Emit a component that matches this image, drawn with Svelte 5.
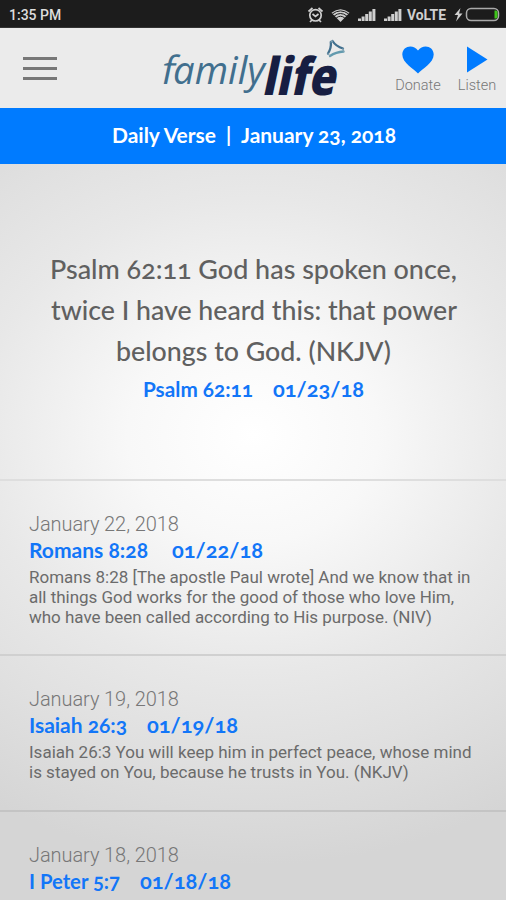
<script lang="ts">
	const entries = [
		{
			id: 'romans',
			date: 'January 22, 2018',
			ref: 'Romans 8:28',
			refWidth: 119,
			short: '01/22/18',
			lines: [
				'Romans 8:28 [The apostle Paul wrote] And we know that in',
				'all things God works for the good of those who love Him,',
				'who have been called according to His purpose. (NIV)'
			]
		},
		{
			id: 'isaiah',
			date: 'January 19, 2018',
			ref: 'Isaiah 26:3',
			refWidth: 98,
			short: '01/19/18',
			lines: [
				'Isaiah 26:3 You will keep him in perfect peace, whose mind',
				'is stayed on You, because he trusts in You. (NKJV)'
			]
		},
		{ id: 'peter', date: 'January 18, 2018', ref: 'I Peter 5:7', refWidth: 91, short: '01/18/18', lines: [] }
	];
	const verse = [
		{ text: 'Psalm 62:11 God has spoken once,', width: 407 },
		{ text: 'twice I have heard this: that power', width: 406 },
		{ text: 'belongs to God. (NKJV)', width: 275 }
	];
</script>

{#snippet fitted(text: string, width: number)}
	<svg class="fitted" {width} height="26">
		<text x="0" y="20.5" textLength={width} lengthAdjust="spacingAndGlyphs">{text}</text>
	</svg>
{/snippet}

<div class="screen">
	<div class="status">
		<span class="clock">1:35 PM</span>
		<svg class="status-icons" width="206" height="28" viewBox="300 0 206 28">
			<g fill="none" stroke="#cfcfcf" stroke-width="1.7">
				<circle cx="315.5" cy="15.3" r="5.7" />
				<path d="M308.5 11.5l4-3.5M322.5 11.5l-4-3.5M312.5 14l3 2.5 3-2.5M312 20l-2 2M319 20l2 2" />
			</g>
			<path d="M331.5 12.8Q340.5 5.5 349.5 12.8L340.5 22Z" fill="#cfcfcf" />
			<g fill="none" stroke="#1c1c1c" stroke-width="1">
				<path d="M332.3 14Q340.5 7.8 348.7 14M334.2 16Q340.5 11 346.8 16M336.2 18Q340.5 14.5 344.8 18" />
			</g>
			<g fill="#cfcfcf">
				<path d="M358 18.5h3v2.5h-3zM361.6 16.5h3v4.5h-3zM365.2 14h3v7h-3zM368.8 11.5h3v9.5h-3zM372.4 9h3v12h-3z" />
				<path d="M384 18.5h3v2.5h-3zM387.6 16.5h3v4.5h-3zM391.2 14h3v7h-3zM394.8 11.5h3v9.5h-3zM398.4 9h3v12h-3z" />
				<path d="M460.5 8l-6 7h3.5l-2 6.5 6.5-8h-3.5z" />
			</g>
			<text class="volte" x="407" y="20" textLength="39" lengthAdjust="spacingAndGlyphs">VoLTE</text>
			<rect x="466.5" y="8.5" width="32" height="12" rx="4.5" fill="none" stroke="#aaa" stroke-width="1.5" />
			<path d="M494.5 10.5h1.5q1.5 0 1.5 2v4q0 2-1.5 2h-1.5z" fill="#3fc41a" />
		</svg>
	</div>

	<header class="bar">
		<div class="menu"><i></i><i></i><i></i></div>
		<svg class="logo" width="192" height="72" viewBox="158 36 192 72">
			<text class="family" transform="translate(159.5 84) skewX(-12)" x="0" y="0">f</text>
			<text class="family slanted" x="173" y="84" textLength="92" lengthAdjust="spacingAndGlyphs">amily</text>
			<text class="life" transform="translate(261.5 95) skewX(-12)" x="0" y="0" textLength="73" lengthAdjust="spacingAndGlyphs">life</text>
			<g fill="none" stroke-linecap="round" stroke-width="2.3">
				<path d="M328 53.5Q331.5 48 330.8 42" stroke="#416f8e" />
				<path d="M332.5 41Q336 46.5 343 48.5" stroke="#416f8e" />
				<path d="M343.5 51.5Q336 52 330 56" stroke="#629aae" />
				<path d="M330.8 42L332.5 41M343 48.5L343.5 51.5M328 53.5L330 56" stroke="#7fa3b4" stroke-width="1.2" />
			</g>
		</svg>
		<div class="action donate">
			<svg width="32" height="28" viewBox="0 0 32 28">
				<path d="M16 27.5C12 23 0.3 17 0.3 8.5C0.3 0 11-2.5 16 4.5C21-2.5 31.7 0 31.7 8.5C31.7 17 20 23 16 27.5Z" />
			</svg>
			<span>Donate</span>
		</div>
		<div class="action listen">
			<svg width="22" height="28" viewBox="0 0 22 28"><path d="M1 0.5L21.5 13.5L1 26.5Z" /></svg>
			<span>Listen</span>
		</div>
	</header>

	<div class="title">
		<svg width="286" height="30">
			<text x="1" y="21" textLength="104" lengthAdjust="spacingAndGlyphs">Daily Verse</text>
			<text x="115" y="20">|</text>
			<text x="130" y="21" textLength="155" lengthAdjust="spacingAndGlyphs">January 23, 2018</text>
		</svg>
	</div>

	<section class="today">
		{#each verse as line}
			<svg class="verse-line" width={line.width} height="41">
				<text x="0" y="30" textLength={line.width} lengthAdjust="spacingAndGlyphs">{line.text}</text>
			</svg>
		{/each}
		<div class="ref">
			{@render fitted('Psalm 62:11', 110)}
			{@render fitted('01/23/18', 91)}
		</div>
	</section>

	{#each entries as entry (entry.id)}
		<section class="entry {entry.id}">
			<div class="date">{entry.date}</div>
			<div class="ref">
				{@render fitted(entry.ref, entry.refWidth)}
				{@render fitted(entry.short, 91)}
			</div>
			<div class="text">
				{#each entry.lines as line}
					<div>{line}</div>
				{/each}
			</div>
		</section>
	{/each}
</div>

<style>
	:global(body) {
		background: #d8d8d8;
	}

	.screen {
		width: 506px;
		height: 900px;
		overflow: hidden;
		font-family: Roboto, 'Liberation Sans', sans-serif;
		background: radial-gradient(ellipse 500px 430px at 253px 435px, #fff 0%, #f8f8f8 25%, #e8e8e8 55%, #e0e0e0 75%, #d5d5d5 100%);
	}

	.status {
		display: flex;
		justify-content: space-between;
		height: 28px;
		background: #1c1c1c;
		border-bottom: 1px solid #333;
		box-sizing: border-box;
	}

	.clock {
		padding-left: 9px;
		font-size: 14px;
		font-weight: 500;
		line-height: 30px;
		color: #ddd;
	}

	.volte {
		font-size: 14px;
		font-weight: 700;
		fill: #cfcfcf;
	}

	.bar {
		display: flex;
		align-items: flex-start;
		height: 80px;
		box-sizing: border-box;
		padding-top: 8px;
		background: #ebebeb;
	}

	.menu {
		display: flex;
		flex-direction: column;
		gap: 7px;
		width: 34px;
		padding: 21px 101px 0 23px;
	}

	.menu i {
		height: 3px;
		background: #777;
	}

	.logo {
		overflow: visible;
	}

	.logo text {
		font-family: 'Open Sans', 'Noto Sans', sans-serif;
	}

	.logo .family {
		font-size: 39px;
		fill: #416f8e;
	}

	.logo .slanted {
		font-style: italic;
	}

	.logo .life {
		font-size: 52px;
		font-weight: 800;
		fill: #171e42;
	}

	.action {
		display: flex;
		flex-direction: column;
		align-items: center;
		gap: 3px;
		padding-top: 10px;
		font-size: 14.5px;
		font-weight: 300;
		line-height: 17px;
		color: #777;
	}

	.action svg {
		fill: #007bff;
	}

	.donate {
		width: 60px;
		margin-left: 38px;
	}

	.listen {
		width: 40px;
		margin-left: 9px;
	}

	.title {
		display: flex;
		justify-content: center;
		height: 56px;
		box-sizing: border-box;
		padding: 14px 0 0 2px;
		background: #007bff;
	}

	.title text {
		font-family: Lato, sans-serif;
		font-size: 20px;
		font-weight: 700;
		font-variant-numeric: oldstyle-nums;
		fill: #fff;
	}

	.today {
		display: flex;
		flex-direction: column;
		align-items: center;
		height: 315px;
		box-sizing: border-box;
		padding-top: 85px;
		padding-left: 1px;
	}

	.verse-line {
		display: block;
		overflow: visible;
	}

	.verse-line text {
		font-family: Lato, sans-serif;
		font-size: 26px;
		font-weight: 500;
		font-variant-numeric: oldstyle-nums;
		fill: #606060;
	}

	.ref {
		display: flex;
		gap: 20px;
		height: 26px;
	}

	.fitted {
		display: block;
		overflow: visible;
	}

	.fitted text {
		font-family: Lato, sans-serif;
		font-size: 20px;
		font-weight: 700;
		font-variant-numeric: oldstyle-nums;
		fill: #1276f8;
	}

	.today .ref {
		margin-top: 4px;
	}

	.entry {
		box-sizing: border-box;
		height: 156px;
		padding: 30px 29px 0;
		border-top: 2px solid #d0d0d0;
	}

	.entry.romans {
		height: 175px;
		border-top-color: #dedede;
	}

	.entry.peter {
		border-top-color: #c4c4c4;
	}

	.romans .ref {
		gap: 24px;
	}

	.date {
		font-size: 20px;
		font-weight: 300;
		line-height: 26px;
		letter-spacing: -0.08px;
		color: #777;
	}

	.text {
		padding-top: 4px;
		font-size: 17px;
		line-height: 20px;
		color: #6b6b6b;
		white-space: nowrap;
	}

	.romans .text {
		letter-spacing: -0.02px;
	}
</style>
